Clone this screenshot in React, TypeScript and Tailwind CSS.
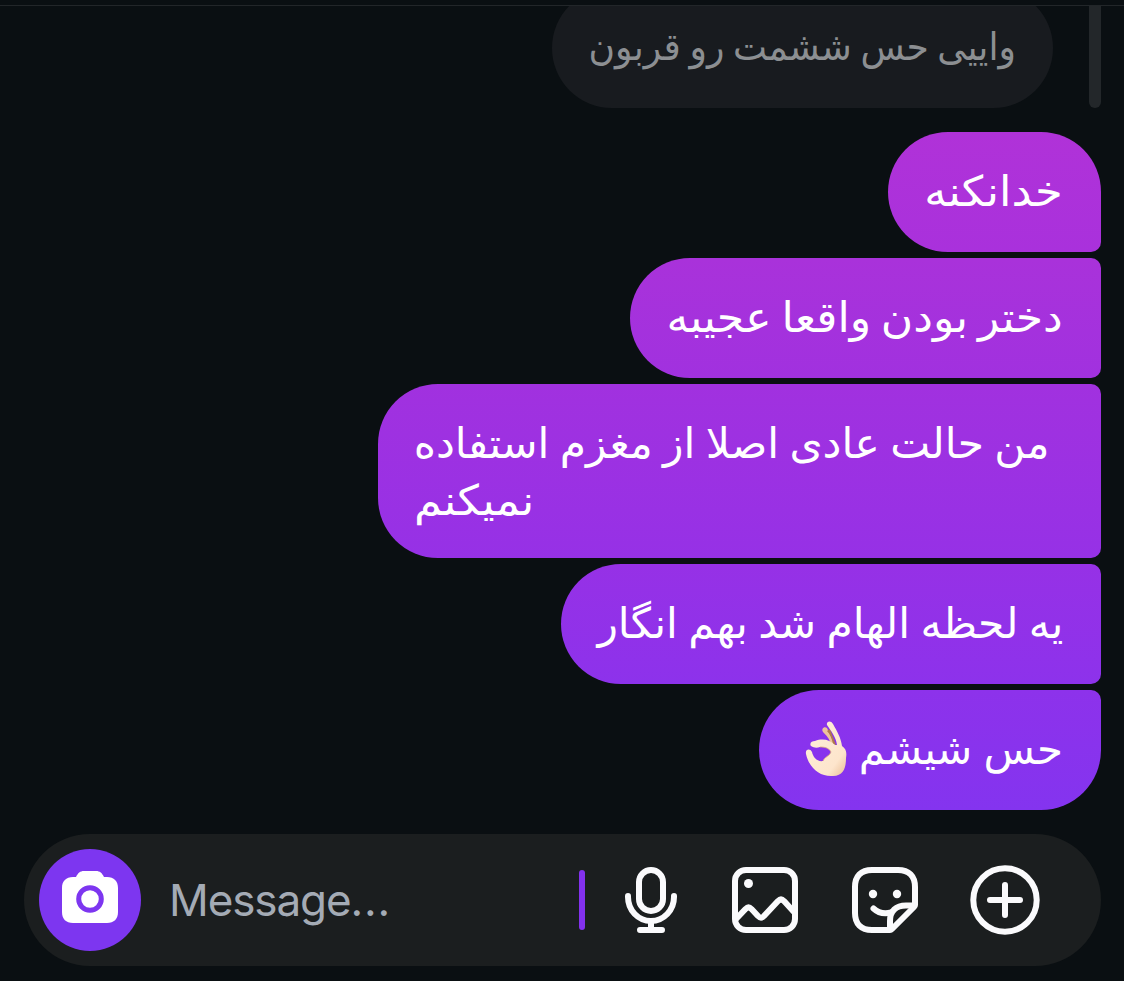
import React from 'react'

type Message = {
  text: string;
  box: string;
  corners: string;
  fill: string;
  textStyle: string;
}

const messages: Message[] = [
  {
    text: 'خدانکنه',
    box: 'w-[213px] h-[120px]',
    corners: 'rounded-l-[60px] rounded-tr-[60px] rounded-br-[10px]',
    fill: 'from-[#b032d8] to-[#a931dc]',
    textStyle: 'right-[38px] scale-x-[1.068]',
  },
  {
    text: 'دختر بودن واقعا عجیبه',
    box: 'w-[471px] h-[120px]',
    corners: 'rounded-l-[60px] rounded-r-[10px]',
    fill: 'from-[#a932da] to-[#a131df]',
    textStyle: 'right-[38px] scale-x-[1.052] [word-spacing:-4px]',
  },
  {
    text: 'من حالت عادی اصلا از مغزم استفاده',
    box: 'w-[723px] h-[174px]',
    corners: 'rounded-l-[60px] rounded-r-[10px]',
    fill: 'from-[#a131df] to-[#9631e6]',
    textStyle: 'right-[52px] scale-x-[1.01] [word-spacing:-3px]',
  },
  {
    text: 'یه لحظه الهام شد بهم انگار',
    box: 'w-[540px] h-[120px]',
    corners: 'rounded-l-[60px] rounded-r-[10px]',
    fill: 'from-[#9631e6] to-[#8d32eb]',
    textStyle: 'right-[38px] scale-x-[1.01] [word-spacing:-3px]',
  },
  {
    text: 'حس شیشم',
    box: 'w-[342px] h-[120px]',
    corners: 'rounded-l-[60px] rounded-br-[60px] rounded-tr-[10px]',
    fill: 'from-[#8d32eb] to-[#8434ef]',
    textStyle: 'right-[38px] [word-spacing:-2px]',
  },
]

const OkHand = () => (
  <svg viewBox="0 0 44 56" className="absolute left-[46px] top-[31px] w-[44px] h-[56px]" role="img" aria-label="👌🏻">
    <defs>
      <linearGradient id="skin" x1="0" y1="0" x2="1" y2="1">
        <stop offset="0" stopColor="#fff0dc" />
        <stop offset="0.75" stopColor="#fde5cc" />
        <stop offset="1" stopColor="#e9bd95" />
      </linearGradient>
    </defs>
    <path d="M18 11c-2-3 1-6 4-4l8 17-5-2c0-4-4-8-7-11Z" fill="#eec39c" />
    <path d="M22 10c3 3 5 8 6 13l3 1-6-16Z" fill="#b07a4c" />
    <path
      d="M22 4c-1-4 4-5 6-1 4 7 8 14 9 22 4 3 5 6 4 12 0 9-2 18-13 18C15 56 4 47 1 33c-1-5 4-6 6-2 1 5 5 10 11 9 1-4 7-5 8-9-2-4-6-5-11-5-3 1-6 1-9-1-2-3 1-5 4-5 8-3 15-1 20 4h2c-1-8-6-14-10-20Z"
      fill="url(#skin)"
    />
    <path d="M15 26c5 0 9 1 11 5-1 4-7 5-8 9" fill="none" stroke="#dda77c" strokeWidth="0.8" />
  </svg>
)

const CameraIcon = () => (
  <svg viewBox="0 0 56 52" className="w-14 h-13">
    <path d="M14 6c2-4 4-6 8-6h12c4 0 6 2 8 6h3c7 0 11 4 11 11v24c0 7-4 11-11 11H11C4 52 0 48 0 41V17C0 10 4 6 11 6Z" fill="#fff" />
    <circle cx="28" cy="28" r="11.3" fill="none" stroke="#7d36f0" strokeWidth="5" />
  </svg>
)

const iconProps = {
  fill: 'none',
  stroke: '#fafafc',
  strokeWidth: 6,
  strokeLinecap: 'round' as const,
  strokeLinejoin: 'round' as const,
}

const MicIcon = () => (
  <svg viewBox="0 0 52 66" className="w-[52px] h-[66px]" {...iconProps}>
    <rect x="14" y="3" width="24" height="41" rx="12" />
    <path d="M3 29v1a23 24 0 0 0 46 0v-1M26 54v8M15 63h22" />
  </svg>
)

const PhotoIcon = () => (
  <svg viewBox="0 0 66 66" className="w-[66px] h-[66px]" {...iconProps}>
    <rect x="3" y="3" width="60" height="60" rx="11" />
    <circle cx="16.5" cy="16.5" r="4.5" fill="#fafafc" stroke="none" />
    <path d="m4 52 9.5-10q3-3 6 0l6.5 7q3 3 6 0l14-15q3-3 6 0l10 11" />
  </svg>
)

const StickerIcon = () => (
  <svg viewBox="0 0 66 66" className="w-[66px] h-[66px]" {...iconProps}>
    <path d="M38 63H20C9 63 3 57 3 46V20C3 9 9 3 20 3h26c11 0 17 6 17 17v18q0 1-1 2L40 62q-1 1-2 1Z" />
    <path d="M38 61V54C38 44 44 38.5 54 38.5h7" />
    <path d="M21.5 41.5q7 6.5 17.5 4" />
    <circle cx="21" cy="27" r="4.2" fill="#fafafc" stroke="none" />
    <circle cx="45" cy="27" r="4.2" fill="#fafafc" stroke="none" />
  </svg>
)

const PlusIcon = () => (
  <svg viewBox="0 0 70 70" className="w-[70px] h-[70px]" {...iconProps}>
    <circle cx="35" cy="35" r="31.7" />
    <path d="M35 20v30M20 35h30" />
  </svg>
)

const Composer = () => (
  <div className="ml-6 mt-6 w-[1077px] h-[132px] rounded-full bg-[#1b1e1f] flex items-center pl-[15px] pr-[61px]">
    <div className="w-[102px] h-[102px] shrink-0 rounded-full bg-[#7d36f0] flex items-center justify-center pb-1.5">
      <CameraIcon />
    </div>
    <div className="ml-[28px] w-[410px] text-[44px] leading-[54px] tracking-[-1.1px] text-[#a4abb5] font-[Inter]">
      Message<span className="tracking-[0.8px]">...</span>
    </div>
    <div className="w-1.5 h-[60px] rounded-full bg-[#8331ee]" />
    <div className="ml-10 mr-auto"><MicIcon /></div>
    <div className="flex items-center">
      <PhotoIcon />
      <div className="ml-[54px] mr-[52px]"><StickerIcon /></div>
      <PlusIcon />
    </div>
  </div>
)

export default function App() {
  return (
    <main className="w-[1124px] h-[981px] overflow-hidden bg-[#0a0f12] font-['DejaVu_Sans','Noto_Sans',sans-serif]">
      <div className="h-1.5 border-b border-[#222629]" />
      <div className="h-[102px] overflow-hidden flex justify-end items-end pr-[23px]">
        <div className="relative w-[501px] h-[120px] shrink-0 rounded-full bg-[#181b1f] text-[#8c8f92]">
          <span dir="rtl" className="absolute right-[37px] top-[31px] text-[38px] leading-[57px] whitespace-nowrap origin-right scale-x-[0.95] [word-spacing:-3px]">
            واییی حس ششمت رو قربون
          </span>
        </div>
        <div className="ml-9 w-3 h-[120px] shrink-0 rounded-full bg-[#23272a]" />
      </div>
      <div className="mt-6 pr-[23px] flex flex-col items-end gap-1.5">
        {messages.map((m, i) => (
          <div key={i} className={`relative bg-linear-to-b text-white ${m.box} ${m.corners} ${m.fill}`}>
            <span dir="rtl" className={`absolute top-[31px] text-[42px] leading-[57px] whitespace-nowrap origin-right ${m.textStyle}`}>
              {m.text}
            </span>
            {i === 2 && (
              <span dir="rtl" className="absolute left-[36px] top-[88px] text-[42px] leading-[57px] whitespace-nowrap origin-left scale-x-[1.068]">نمیکنم</span>
            )}
            {i === 4 && <OkHand />}
          </div>
        ))}
      </div>
      <Composer />
    </main>
  )
}
